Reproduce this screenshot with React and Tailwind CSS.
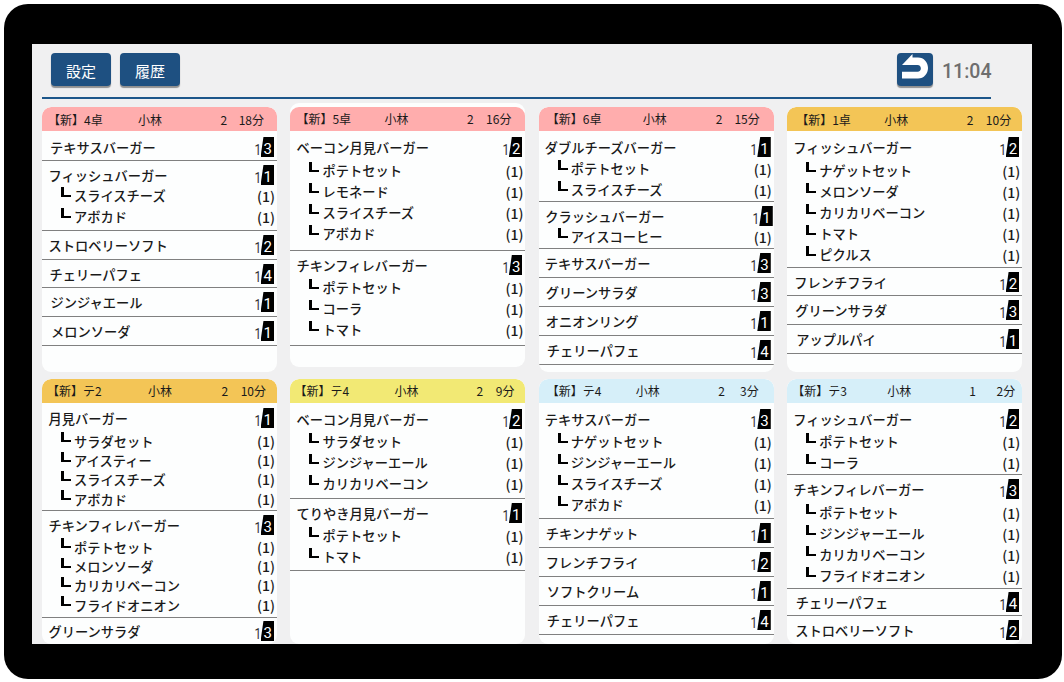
import clsx from 'clsx';

const ORDERS = [
  {
    seat: '4卓', staff: '小林', guests: 2, minutes: 18,
    tone: 'bg-[#ffadad]',
    cols: 'grid-cols-[96px_82.5px_auto_1fr] pr-[13px] pt-[1px]',
    seatPad: 'pl-[6px]',
    items: [
      { name: 'テキサスバーガー', course: 3, box: 'h-[30px] pt-[6px]', indent: 'pl-[8px]' },
      {
        name: 'フィッシュバーガー', course: 1, box: 'h-[70px] pt-[4px]', indent: 'pl-[6.5px]',
        subs: ['スライスチーズ', 'アボカド'], subsPad: 'pt-0',
      },
      { name: 'ストロベリーソフト', course: 2, box: 'h-[29px] pt-[4px]', indent: 'pl-[6.5px]' },
      { name: 'チェリーパフェ', course: 4, box: 'h-[28px] pt-[4px]', indent: 'pl-[7.5px]' },
      { name: 'ジンジャエール', course: 1, box: 'h-[29px] pt-[4px]', indent: 'pl-[8.5px]' },
      { name: 'メロンソーダ', course: 1, box: 'h-[29px] pt-[4px]', indent: 'pl-[9px]' },
    ],
  },
  {
    seat: '5卓', staff: '小林', guests: 2, minutes: 16,
    tone: 'bg-[#ffadad]',
    cols: 'grid-cols-[94px_82.5px_auto_1fr] pr-[14px] pb-[1px]',
    seatPad: 'pl-[6px]',
    card: '-mt-[4px] pt-[4px] mb-[5px]',
    items: [
      {
        name: 'ベーコン月見バーガー', course: 2, box: 'h-[120px] pt-[6px]', indent: 'pl-[6px]',
        subs: ['ポテトセット', 'レモネード', 'スライスチーズ', 'アボカド'], subsPad: 'pt-[3px]',
      },
      {
        name: 'チキンフィレバーガー', course: 3, box: 'h-[95px] pt-[4px]', indent: 'pl-[6px]',
        subs: ['ポテトセット', 'コーラ', 'トマト'], subsPad: 'pt-[2px]',
      },
    ],
  },
  {
    seat: '6卓', staff: '小林', guests: 2, minutes: 15,
    tone: 'bg-[#ffadad]',
    cols: 'grid-cols-[104px_73px_auto_1fr] pr-[14px] pb-[1px]',
    seatPad: 'pl-[8px]',
    items: [
      {
        name: 'ダブルチーズバーガー', course: 1, box: 'h-[71px] pt-[6px]', indent: 'pl-[6px]',
        subs: ['ポテトセット', 'スライスチーズ'], subsPad: 'pt-[1px]',
      },
      {
        name: 'クラッシュバーガー', course: 1, box: 'h-[47px] pt-[4px]', indent: 'pl-[6.5px]',
        countPad: 'pr-[1px]', subs: ['アイスコーヒー'], subsPad: 'pt-0',
      },
      { name: 'テキサスバーガー', course: 3, box: 'h-[29px] pt-[4px]', indent: 'pl-[6px]' },
      { name: 'グリーンサラダ', course: 3, box: 'h-[29px] pt-[4px]', indent: 'pl-[7px]' },
      { name: 'オニオンリング', course: 1, box: 'h-[29px] pt-[4px]', indent: 'pl-[7px]' },
      { name: 'チェリーパフェ', course: 4, box: 'h-[29px] pt-[4px]', indent: 'pl-[8px]' },
    ],
  },
  {
    seat: '1卓', staff: '小林', guests: 2, minutes: 10,
    tone: 'bg-[#f3c556]',
    cols: 'grid-cols-[97px_82.5px_auto_1fr] pr-[11px] pt-[1px]',
    seatPad: 'pl-[9px]',
    items: [
      {
        name: 'フィッシュバーガー', course: 2, box: 'h-[137px] pt-[6px]', indent: 'pl-[6px]',
        subs: ['ナゲットセット', 'メロンソーダ', 'カリカリベーコン', 'トマト', 'ピクルス'], subsPad: 'pt-[3px]',
      },
      { name: 'フレンチフライ', course: 2, box: 'h-[28px] pt-[4px]', indent: 'pl-[7px]' },
      { name: 'グリーンサラダ', course: 3, box: 'h-[29px] pt-[4px]', indent: 'pl-[8px]' },
      { name: 'アップルパイ', course: 1, box: 'h-[29px] pt-[4px]', indent: 'pl-[9px]' },
    ],
  },
  {
    seat: 'テ2', staff: '小林', guests: 2, minutes: 10,
    tone: 'bg-[#f3c556]',
    cols: 'grid-cols-[106px_73.5px_auto_1fr] pr-[11px]',
    seatPad: 'pl-[5px]',
    items: [
      {
        name: '月見バーガー', course: 1, box: 'h-[108px] pt-[5px]', indent: 'pl-[6.5px]',
        subs: ['サラダセット', 'アイスティー', 'スライスチーズ', 'アボカド'],
        subsPad: 'pt-[3px]', subHeight: 'h-[19.4px]',
      },
      {
        name: 'チキンフィレバーガー', course: 3, box: 'h-[107px] pt-[4px]', indent: 'pl-[6.5px]',
        subs: ['ポテトセット', 'メロンソーダ', 'カリカリベーコン', 'フライドオニオン'],
        subsPad: 'pt-[2px]', subHeight: 'h-[19.4px]',
      },
      { name: 'グリーンサラダ', course: 3, box: 'h-[25px] pt-[3px] border-b-0', indent: 'pl-[6.5px]' },
    ],
  },
  {
    seat: 'テ4', staff: '小林', guests: 2, minutes: 9,
    tone: 'bg-[#f2e974]',
    cols: 'grid-cols-[104px_82px_auto_1fr] pr-[11px]',
    seatPad: 'pl-[4px]',
    items: [
      {
        name: 'ベーコン月見バーガー', course: 2, box: 'h-[96px] pt-[6px]', indent: 'pl-[6px]',
        subs: ['サラダセット', 'ジンジャーエール', 'カリカリベーコン'], subsPad: 'pt-[2px]',
      },
      {
        name: 'てりやき月見バーガー', course: 1, box: 'h-[72px] pt-[4px]', indent: 'pl-[6px]',
        subs: ['ポテトセット', 'トマト'], subsPad: 'pt-[2px]',
      },
    ],
  },
  {
    seat: 'テ4', staff: '小林', guests: 2, minutes: 3,
    tone: 'bg-[#d6eff9]',
    cols: 'grid-cols-[97px_82.5px_auto_1fr] pr-[15px] pb-[1px]',
    seatPad: 'pl-[8px]',
    items: [
      {
        name: 'テキサスバーガー', course: 3, box: 'h-[116px] pt-[6px]', indent: 'pl-[6px]',
        subs: ['ナゲットセット', 'ジンジャーエール', 'スライスチーズ', 'アボカド'], subsPad: 'pt-[2px]',
      },
      { name: 'チキンナゲット', course: 1, box: 'h-[29px] pt-[4px]', indent: 'pl-[7px]' },
      { name: 'フレンチフライ', course: 2, box: 'h-[29px] pt-[4px]', indent: 'pl-[7px]' },
      { name: 'ソフトクリーム', course: 1, box: 'h-[29px] pt-[4px]', indent: 'pl-[8px]' },
      { name: 'チェリーパフェ', course: 4, box: 'h-[29px] pt-[4px]', indent: 'pl-[8px]' },
    ],
  },
  {
    seat: 'テ3', staff: '小林', guests: 1, minutes: 2,
    tone: 'bg-[#d6eff9]',
    cols: 'grid-cols-[100px_82px_auto_1fr] pr-[7px]',
    seatPad: 'pl-[5px]',
    items: [
      {
        name: 'フィッシュバーガー', course: 2, box: 'h-[72px] pt-[6px]', indent: 'pl-[6px]',
        subs: ['ポテトセット', 'コーラ'], subsPad: 'pt-[2px]',
      },
      {
        name: 'チキンフィレバーガー', course: 3, box: 'h-[114px] pt-[4px]', indent: 'pl-[6px]',
        subs: ['ポテトセット', 'ジンジャーエール', 'カリカリベーコン', 'フライドオニオン'], subsPad: 'pt-[3px]',
      },
      { name: 'チェリーパフェ', course: 4, box: 'h-[27px] pt-[3px]', indent: 'pl-[8.5px]' },
      { name: 'ストロベリーソフト', course: 2, box: 'h-[27px] pt-[4px] border-b-0', indent: 'pl-[8px]' },
    ],
  },
];

function CourseBadge({ course }) {
  return (
    <span className="flex h-[20.5px] w-[13.5px] items-center justify-end bg-black pr-[2px] pt-[4px] font-[Roboto] text-[15px] leading-none font-normal text-white [clip-path:polygon(22%_0,100%_0,100%_100%,0_100%)]">
      {course}
    </span>
  );
}

function SubItem({ name, height = 'h-[21px]' }) {
  return (
    <li className={clsx('flex items-center pl-[19px] pr-[2px]', height)}>
      <span className="mb-[7px] h-[10px] w-[10px] border-b-2 border-l-[3px] border-black" />
      <span className="ml-[3px] pt-[1px]">{name}</span>
      <span className="ml-auto text-[14px]">(1)</span>
    </li>
  );
}

function OrderItem({ name, course, box, indent, countPad = 'pr-[3px]', subs, subsPad, subHeight }) {
  return (
    <li className={clsx('shrink-0 border-b border-[#808080]', box)}>
      <div className={clsx('flex h-[20px] items-center', indent, countPad)}>
        <span className="pt-[1px]">{name}</span>
        <span className="mt-[5px] mr-[-1px] ml-auto scale-x-85 font-[Roboto] text-[14px] font-normal text-[#333]">1</span>
        <CourseBadge course={course} />
      </div>
      {subs && (
        <ul className={subsPad}>
          {subs.map((sub) => (
            <SubItem key={sub} name={sub} height={subHeight} />
          ))}
        </ul>
      )}
    </li>
  );
}

function OrderCard({ seat, staff, guests, minutes, tone, cols, seatPad, card, items }) {
  return (
    <section className={clsx('flex flex-col overflow-hidden rounded-[9px] bg-[#fdfefe]', card)}>
      <header
        className={clsx(
          'grid h-[24px] shrink-0 items-center rounded-t-[9px] text-[12px] leading-none whitespace-nowrap',
          tone,
          cols,
        )}
      >
        <span className={seatPad}>【新】{seat}</span>
        <span>{staff}</span>
        <span>{guests}</span>
        <span className="text-right">{minutes}分</span>
      </header>
      <ul className="flex flex-col text-[13.25px] leading-none font-medium whitespace-nowrap">
        {items.map((item) => (
          <OrderItem key={item.name} {...item} />
        ))}
      </ul>
    </section>
  );
}

function ToolbarButton({ children }) {
  return (
    <button className="flex h-[33px] w-[60px] items-center justify-center rounded-[4px] bg-[#1e5081] pt-[2px] text-[15px] leading-none text-white shadow-[0_2px_1px_0_rgba(0,0,0,0.4)]">
      {children}
    </button>
  );
}

export default function App() {
  return (
    <div className="h-[682px] w-[1064px] overflow-hidden bg-white pt-1 pl-1 font-['Noto_Sans_CJK_JP',sans-serif] text-[#1a1a1a]">
      <div className="h-[675px] w-[1058px] rounded-[24px] bg-black px-[28px] pt-[40px]">
        <main className="h-[600px] w-[1000px] overflow-hidden bg-[#f0f0f1] pl-[10px]">
          {/* Toolbar */}
          <div className="flex h-[55px] w-[949px] items-start gap-[9px] border-b-2 border-[#1c568a] pt-[9px] pl-[9px]">
            <ToolbarButton>設定</ToolbarButton>
            <ToolbarButton>履歴</ToolbarButton>
            <button
              aria-label="戻る"
              className="ml-auto h-[33px] w-[36px] rounded-[4px] bg-[#1e5081] shadow-[0_2px_1px_0_rgba(0,0,0,0.4)]"
            >
              <svg viewBox="0 0 36 33" className="h-[33px] w-[36px]">
                <path
                  d="M5 12 15.5 1V4.5H21C27 4.5 31 9.5 31 15S27 25.5 21 25.5H5V18.8H20.5C25 18.8 25 12 20.5 12Z"
                  fill="#fff"
                />
              </svg>
            </button>
            <span className="w-[49px] pt-[9px] font-[Roboto] text-[19.5px] leading-none font-medium text-[#6e6e6e]">11:04</span>
          </div>

          {/* Orders, oldest first */}
          <div className="mt-[8px] grid grid-cols-[repeat(4,235px)] grid-rows-[265px_265px] gap-x-[13.4px] gap-y-[7px]">
            {ORDERS.map((order, i) => (
              <OrderCard key={i} {...order} />
            ))}
          </div>
        </main>
      </div>
    </div>
  );
}
